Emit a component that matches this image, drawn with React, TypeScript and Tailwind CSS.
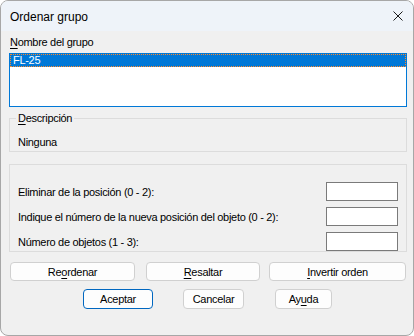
import React from "react";

const font = { fontFamily: '"Liberation Sans", Arial, sans-serif' };

function Btn({ children, className = "" }: { children: React.ReactNode; className?: string }) {
  return (
    <div
      className={`flex items-center justify-center rounded-[4px] border border-[#d0d0d0] bg-[#fdfdfd] text-[11px] leading-[14px] tracking-[-0.3px] text-black ${className}`}
    >
      {children}
    </div>
  );
}

export default function App() {
  return (
    <div className="w-[414px] h-[336px] bg-white" style={font}>
      <div className="w-[414px] h-[336px] border border-[#a7a7a7] rounded-[8px] overflow-hidden bg-[#f0f0f0] flex flex-col">
        <div className="h-[30px] shrink-0 bg-[#eef3f9] flex items-center justify-between pl-[9px] pr-[10px]">
          <span className="text-[12px] leading-[14px] text-black pt-[1px]">Ordenar grupo</span>
          <svg width="10" height="10" viewBox="0 0 10 10" className="block">
            <path d="M0.5 0.5 L9.5 9.5 M9.5 0.5 L0.5 9.5" stroke="#1a1a1a" strokeWidth="1" fill="none" />
          </svg>
        </div>
        <div className="flex flex-col pl-[8px] pt-[4px] w-[406px] text-[11px] leading-[14px] tracking-[-0.3px] text-black">
          <div className="pl-[1px] h-[14px]">
            <span className="underline underline-offset-[2px]">N</span>ombre del grupo
          </div>
          <div className="mt-[4px] h-[54px] border border-[#0078d7] bg-white">
            <div className="h-[13px] bg-[#0078d7] border border-dotted border-[#ff8a2a] text-white leading-[11px] pl-[2px]">
              FL-25
            </div>
          </div>
          <fieldset className="mt-[4px] border border-[#dcdcdc] px-0 pb-[2px]">
            <legend className="ml-[6px] px-[2px] leading-[14px]">
              <span className="underline underline-offset-[2px]">D</span>escripción
            </legend>
            <div className="mt-[10px] pl-[8px] h-[14px]">Ninguna</div>
          </fieldset>
          <div className="mt-[12px] border border-[#dcdcdc] pt-[17px] pl-[8px] pr-[8px] flex flex-col gap-[6px]">
            <div className="flex items-center justify-between h-[19px]">
              <span>Eliminar de la posición (0 - 2):</span>
              <div className="w-[72px] h-[19px] border border-[#7a7a7a] bg-white" />
            </div>
            <div className="flex items-center justify-between h-[19px]">
              <span>Indique el número de la nueva posición del objeto (0 - 2):</span>
              <div className="w-[72px] h-[19px] border border-[#7a7a7a] bg-white" />
            </div>
            <div className="flex items-center justify-between h-[19px]">
              <span>Número de objetos (1 - 3):</span>
              <div className="w-[72px] h-[19px] border border-[#7a7a7a] bg-white" />
            </div>
          </div>
          <div className="mt-[10px] flex h-[19px]">
            <Btn className="ml-[1px] w-[125px] h-[19px]">
              <span>
                Re<span className="underline underline-offset-[2px]">o</span>rdenar
              </span>
            </Btn>
            <Btn className="ml-[11px] w-[114px] h-[19px]">
              <span>
                <span className="underline underline-offset-[2px]">R</span>esaltar
              </span>
            </Btn>
            <Btn className="ml-[9px] w-[137px] h-[19px]">
              <span>
                <span className="underline underline-offset-[2px]">I</span>nvertir orden
              </span>
            </Btn>
          </div>
          <div className="mt-[8px] flex h-[20px]">
            <Btn className="ml-[74px] w-[70px] h-[20px] !border-[#0067c0]">Aceptar</Btn>
            <Btn className="ml-[30px] w-[61px] h-[20px]">Cancelar</Btn>
            <Btn className="ml-[31px] w-[57px] h-[20px]">
              <span>
                Ay<span className="underline underline-offset-[2px]">u</span>da
              </span>
            </Btn>
          </div>
        </div>
      </div>
    </div>
  );
}
